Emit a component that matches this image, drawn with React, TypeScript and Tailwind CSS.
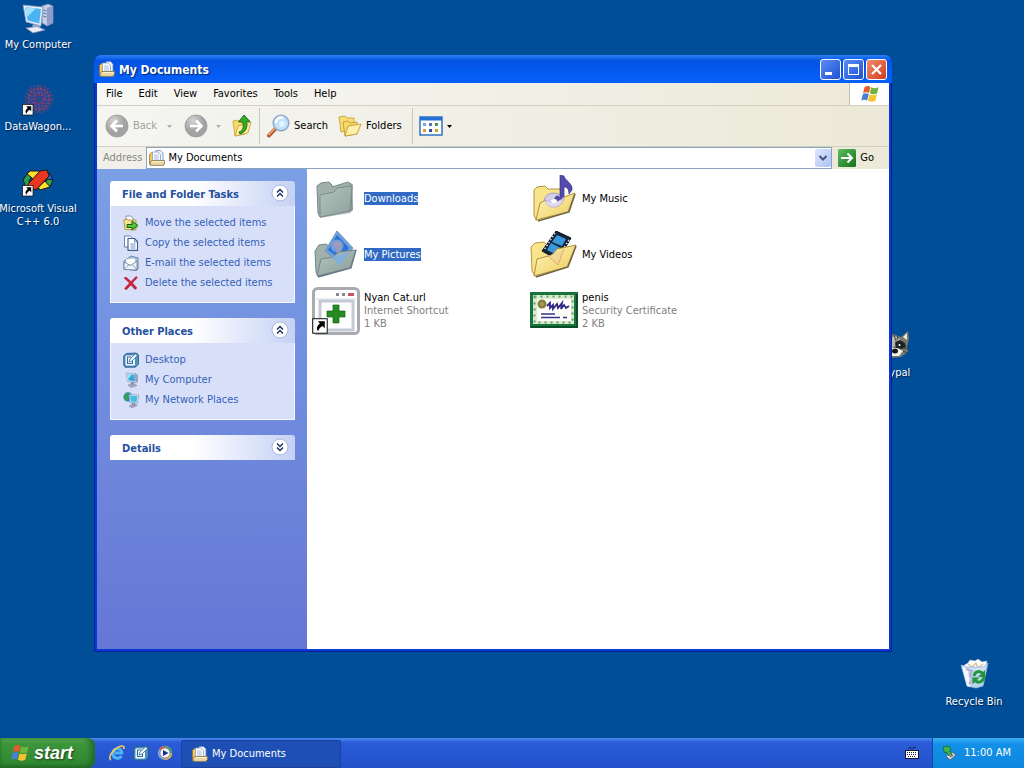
import React, { useState } from "react";

type IconProps = { className?: string };

function Flag({ className }: IconProps) {
  return (
    <svg viewBox="0 0 20 20" className={className} aria-hidden="true">
      <path d="M4.5 3.2C6.5 1.6 8.6 1.8 10.4 2.8L9 9C7 8 5 8 3 9.3Z" fill="#e8592b" />
      <path d="M11.2 3.2C13.4 4.6 16 4.4 18.6 3.2L17 9.6C14.6 10.6 12 10.6 9.8 9.3Z" fill="#6fb53c" />
      <path d="M2.8 10.2C4.8 8.8 6.8 8.9 8.8 10L7.2 16.4C5.2 15.4 3.2 15.4 1.2 16.8Z" fill="#4a7fd8" />
      <path d="M9.6 10.3C11.8 11.6 14.4 11.6 16.8 10.6L15.2 17C12.6 18.2 10.2 18 8 16.7Z" fill="#f5c42c" />
    </svg>
  );
}

function DocsIcon({ className }: IconProps) {
  return (
    <svg viewBox="0 0 16 16" className={className} aria-hidden="true">
      <path d="M.5 4.500L2.500 2.500H5V14.500H.5Z" fill="#f3c95c" stroke="#a3772a" strokeWidth=".8" />
      <path d="M7 .5H11.500L14 3V11H7Z" fill="#eef4fe" stroke="#6d86b5" strokeWidth=".8" />
      <path d="M3.500 2H9L11.500 4.500V11H3.500Z" fill="#fff" stroke="#7d92bb" strokeWidth=".7" />
      <path d="M5 5H9.500M5 7H10M5 9H10" stroke="#8fb0dd" strokeWidth=".9" />
      <path d="M3 10.500H15.500V14H14.500V15.400H1.500L1 12Z" fill="#e9d7a4" stroke="#84724c" strokeWidth=".8" />
      <path d="M3.500 11.500H14.500" stroke="#fff4cf" strokeWidth=".9" />
    </svg>
  );
}

function ComputerIcon({ className }: IconProps) {
  return (
    <svg viewBox="0 0 32 32" className={className} aria-hidden="true">
      <path d="M20 4L26 2L31 4V21L25 24L20 21Z" fill="#c4cee6" stroke="#7484ae" strokeWidth=".8" />
      <path d="M25 6L31 4V21L25 24Z" fill="#8d9cc8" />
      <path d="M21 8L24.500 9M21 11L24.500 12M21 14L24.500 15" stroke="#5f719f" strokeWidth="1" />
      <path d="M11 22L18 23L18.500 27L10 26Z" fill="#9fb0d4" />
      <path d="M4 26L15 24.500L23 28L11 31Z" fill="#e9edf8" stroke="#8391b5" strokeWidth=".8" />
      <path d="M1 3L21 5L19 24L4 20Z" fill="#e8eefb" stroke="#7f8fb8" strokeWidth=".8" />
      <path d="M3 5L19 7L17.300 21.500L5.500 18.500Z" fill="#48b5f2" />
      <path d="M3 5L14 6.400L5 15Z" fill="#9fe0fb" />
    </svg>
  );
}

function Shortcut({ x, y, s }: { x: number; y: number; s: number }) {
  return (
    <g transform={`translate(${x} ${y}) scale(${s})`}>
      <rect x=".5" y=".5" width="10" height="10" fill="#fff" stroke="#111" strokeWidth=".7" />
      <path d="M4 2.200H8.800V7L7.300 5.500C5.700 6.500 4.500 7.600 4.300 9.200C2.600 7.400 3.500 5.200 5.500 3.800Z" fill="#000" />
    </g>
  );
}

function SpiralIcon({ className }: IconProps) {
  return (
    <svg viewBox="0 0 32 32" className={className} aria-hidden="true">
      <circle cx="17" cy="15" r="12" fill="#4a3f86" opacity=".55" />
      <g fill="none" strokeDasharray="2 1.600">
        <circle cx="17" cy="15" r="13.500" stroke="#55427f" strokeWidth="2" />
        <circle cx="17" cy="15" r="10.500" stroke="#8d4468" strokeWidth="2.200" />
        <circle cx="17" cy="15" r="7.500" stroke="#50489a" strokeWidth="2.200" />
        <circle cx="17" cy="15" r="5" stroke="#98385c" strokeWidth="2.200" />
        <path d="M8 5L26 26M26 5L8 26M17 1V29" stroke="#7e4173" strokeWidth="1" />
      </g>
      <circle cx="17" cy="15" r="3" fill="#274b8d" />
      <Shortcut x={0} y={20} s={1.05} />
    </svg>
  );
}

function VisualCIcon({ className }: IconProps) {
  return (
    <svg viewBox="0 0 32 32" className={className} aria-hidden="true">
      <g stroke="#191919" strokeWidth="1">
        <path d="M1 14L5 8L10 10L7 15L9 22L4 21Z" fill="#2c9c49" />
        <path d="M5 8L8 5L17 5L19 8L12 14L9 11Z" fill="#ffe02e" />
        <path d="M23 5L28 8L31 14L28 16L24 12Z" fill="#2e67cc" />
        <path d="M31 14L28 21L23 18L25 13Z" fill="#39a04a" />
        <path d="M28 21L18 24L16 21L23 15Z" fill="#ffe02e" />
        <path d="M7 17L18 5L25 4L27 10L15 23L10 24L5 21Z" fill="#e9371e" />
      </g>
      <Shortcut x={0} y={19} s={1.05} />
    </svg>
  );
}

function RaccoonIcon({ className }: IconProps) {
  return (
    <svg viewBox="0 0 32 32" className={className} aria-hidden="true">
      <path d="M2 8L9 6L15 4L23 7L30 1L31 9L29 17L30 22L23 27L14 28L5 22Z" fill="#77786f" />
      <path d="M25 7L29 3L29 10Z" fill="#efe9da" />
      <path d="M11 8L17 6L23 10L19 12L15 18L10 13Z" fill="#b9b7aa" />
      <path d="M17 12L22 10L27 13L28 17L24 19L18 18Z" fill="#202326" />
      <path d="M7 13L13 15L14 19L8 20Z" fill="#202326" />
      <path d="M14 18L19 18L25 21L21 26L13 26L10 22Z" fill="#f5f4e9" />
      <ellipse cx="17" cy="21" rx="3" ry="2.500" fill="#171a1c" />
      <circle cx="21.500" cy="15" r="1" fill="#fff" />
      <path d="M16 5L18 11M20 6L19 10M26 18L30 19M25 21L29 23" stroke="#414640" strokeWidth="1" />
    </svg>
  );
}

function RecycleIcon({ className }: IconProps) {
  return (
    <svg viewBox="0 0 32 32" className={className} aria-hidden="true">
      <path d="M5 7L10 4L12 1L17 2L20 0L24 3L29 2L27 11L6 12Z" fill="#fff" stroke="#b8bfd5" strokeWidth=".7" />
      <path d="M10 5L14 8L18 4L20 9L25 5" fill="none" stroke="#d6ba8e" strokeWidth="1.200" />
      <path d="M3 6L8 8L25 8L30 4L25 27L18 29L9 27Z" fill="#c9e0f3" fillOpacity=".93" stroke="#91b6d9" strokeWidth=".8" />
      <path d="M4 7L10 11L12 28L9 27Z" fill="#f2f8fd" />
      <path d="M8 10L14 12L12 16L15 20L11 25" fill="none" stroke="#b6a8d4" strokeWidth="2" />
      <g fill="none" stroke="#22963b" strokeWidth="3">
        <path d="M16 17C17 12 22 11 25 15" />
        <path d="M26 18C25 23 20 25 17 21" />
      </g>
      <path d="M27 11V18H20ZM14.500 25.500V18.500H21.500Z" fill="#22963b" />
    </svg>
  );
}

function MoveIcon({ className }: IconProps) {
  return (
    <svg viewBox="0 0 16 16" className={className} aria-hidden="true">
      <path d="M3 1H8L10 3V9H3Z" fill="#fff" stroke="#6e82a6" strokeWidth=".8" />
      <path d="M.8 5L4 4L5 5H13V15L2 14.500Z" fill="#f4e58c" stroke="#a58431" strokeWidth=".8" />
      <path d="M4 9.500H9V6L15 10.500L9 15V12.500H4Z" fill="#5cc22e" stroke="#12631a" strokeWidth="1" />
    </svg>
  );
}
function CopyIcon({ className }: IconProps) {
  return (
    <svg viewBox="0 0 16 16" className={className} aria-hidden="true">
      <path d="M1.500 1H7.500L9.500 3V12H1.500Z" fill="#fff" stroke="#5875a8" strokeWidth=".9" />
      <path d="M5 3.500H11.500L14.500 6.500V15.400H5Z" fill="#fff" stroke="#385a94" strokeWidth="1.100" />
      <path d="M11.500 4V7H14.500M7.500 9H12.500M7.500 11H12.500M7.500 13H12.500" stroke="#6387bd" strokeWidth=".9" fill="none" />
    </svg>
  );
}
function MailIcon({ className }: IconProps) {
  return (
    <svg viewBox="0 0 16 16" className={className} aria-hidden="true">
      <path d="M1 6L8 1L15 3V14L13 15.500L1 14Z" fill="#a9c3df" stroke="#59779b" strokeWidth=".8" />
      <path d="M3 4L12 3L13 10H3Z" fill="#fff" stroke="#a0aabb" strokeWidth=".5" />
      <path d="M1 7L7.500 10.500L14 6V15L1 14.500Z" fill="#edf3fa" stroke="#687b96" strokeWidth=".8" />
      <path d="M1 14.500L6 9.500M14 15L9.500 9.500" stroke="#687b96" strokeWidth=".7" />
    </svg>
  );
}
function DeleteIcon({ className }: IconProps) {
  return (
    <svg viewBox="0 0 16 16" className={className} aria-hidden="true">
      <path d="M1 3L3 2L8 6.500L13 1.500L14.500 2.500L9.500 8L14 13L12 14.500L8 10L3 15L1.500 13.500L6.500 8Z" fill="#cf1f35" stroke="#9a1226" strokeWidth=".4" />
    </svg>
  );
}
function DesktopIcon({ className }: IconProps) {
  return (
    <svg viewBox="0 0 16 16" className={className} aria-hidden="true">
      <path d="M3 1.500L13.500 1L15.500 3V12L12.500 15.200H2L.7 13V4Z" fill="#4c93c4" stroke="#1f5686" strokeWidth=".8" />
      <rect x="2" y="3" width="10.500" height="11" rx="1.500" fill="#f5fbff" stroke="#3478a9" strokeWidth=".8" />
      <path d="M8.500 5H4.500V11.500H9.500V9" fill="none" stroke="#356e99" strokeWidth="1.100" />
      <path d="M6 10L7 7L12.500 2L14.500 3.500L9 9Z" fill="#fff" stroke="#2a699a" strokeWidth=".8" />
    </svg>
  );
}
function MonitorIcon({ className }: IconProps) {
  return (
    <svg viewBox="0 0 16 16" className={className} aria-hidden="true">
      <path d="M3 1L12.500 1.500L13 10.500L4.500 9.500Z" fill="#ecf3ff" stroke="#8193b9" strokeWidth=".6" />
      <path d="M4.200 2.200L11.500 2.600L12 9.300L5.500 8.500Z" fill="#36a9d8" />
      <path d="M4.200 2.200L9 2.600L5 7Z" fill="#9be2f2" />
      <path d="M12.500 1.500L14.500 3V9.500L13 10.500ZM8 10H11V12H8ZM5 13L10 11.500L14 13.500L8 15.500Z" fill="#a7a4c6" stroke="#7681a3" strokeWidth=".5" />
    </svg>
  );
}
function NetworkIcon({ className }: IconProps) {
  return (
    <svg viewBox="0 0 16 16" className={className} aria-hidden="true">
      <circle cx="5" cy="5" r="4.700" fill="#3b8bc8" />
      <path d="M1 4L4 .8L7 1L5 4L6 7L3 9L2 6Z" fill="#38a149" />
      <path d="M6 2.500L15.500 3L14.500 11.500L7 10.500Z" fill="#ecf3ff" stroke="#6988ae" strokeWidth=".6" />
      <path d="M7 3.600L14.300 4L13.500 10.400L7.900 9.600Z" fill="#44bfe2" />
      <path d="M9 11H12V13H9ZM6 14L10 12.500L14.500 13.500L9 15.700Z" fill="#b0a5c4" stroke="#7782a1" strokeWidth=".5" />
    </svg>
  );
}

function NavCircle({ forward = false }: { forward?: boolean }) {
  return (
    <svg viewBox="0 0 24 24" className="size-6" aria-hidden="true">
      <defs>
        <radialGradient id={forward ? "navF" : "navB"} cx=".35" cy=".25">
          <stop offset="0" stopColor="#d2d2d2" />
          <stop offset="1" stopColor="#a2a2a2" />
        </radialGradient>
      </defs>
      <circle cx="12" cy="12" r="11" fill={forward ? "url(#navF)" : "url(#navB)"} stroke="#999" strokeWidth=".8" />
      <path
        d={forward ? "M6 12H17M12 6.500L17.500 12L12 17.500" : "M18 12H7M12 6.500L6.500 12L12 17.500"}
        fill="none" stroke="#fff" strokeWidth="2.600"
      />
    </svg>
  );
}

function UpIcon() {
  return (
    <svg viewBox="0 0 24 24" className="size-6" aria-hidden="true">
      <path d="M2 7L7 6L9 8L14 7V20L4 22Z" fill="#f9dc6c" stroke="#c69b2f" strokeWidth=".8" />
      <path d="M7 12L20 8L17 19L4 22Z" fill="#fcec9b" stroke="#c69b2f" strokeWidth=".8" />
      <path d="M8 18C12.500 16.500 13 12.500 11.500 8H7.500L13 1L19 7.500H15.500C17 13 14.500 18.500 9 20Z" fill="#39a929" stroke="#166b17" strokeWidth=".9" />
    </svg>
  );
}
function SearchIcon() {
  return (
    <svg viewBox="0 0 24 24" className="size-6" aria-hidden="true">
      <path d="M10 14L3 21.500" stroke="#a75531" strokeWidth="4" strokeLinecap="round" />
      <path d="M9 14L3 20.500" stroke="#ed9968" strokeWidth="2" strokeLinecap="round" />
      <circle cx="15" cy="9" r="7.800" fill="#bfe3fb" stroke="#8fa7cd" strokeWidth="1.500" />
      <path d="M10 9A5 5 0 0 1 17 4" stroke="#fff" strokeWidth="2.500" fill="none" />
      <circle cx="16" cy="10" r="3" fill="#e0f5ff" />
    </svg>
  );
}
function FoldersIcon() {
  return (
    <svg viewBox="0 0 24 24" className="size-6" aria-hidden="true">
      <path d="M1 3L7 2L9 4L16 4V15L3 18Z" fill="#f8de75" stroke="#c7a33b" strokeWidth=".9" />
      <path d="M5 8L10 7L12 9L19 8V20L7 22Z" fill="#f7da69" stroke="#c29a31" strokeWidth=".9" />
      <path d="M10 12L23 10L19 20L7 22Z" fill="#fdf0a9" stroke="#c29a31" strokeWidth=".9" />
    </svg>
  );
}
function ViewsIcon() {
  return (
    <svg viewBox="0 0 24 20" className="h-5 w-6" aria-hidden="true">
      <rect x="1" y="1" width="22" height="18" fill="#fff" stroke="#2468bd" strokeWidth="1.400" />
      <path d="M1 1H23V4.500H1Z" fill="#2570d5" />
      <path d="M4 7H7V10H4Z" fill="#81a2dc" /><path d="M10 7H13V10H10Z" fill="#5672b8" /><path d="M16 7H19V10H16Z" fill="#3da047" />
      <path d="M4 13H7V16H4Z" fill="#e59245" /><path d="M10 13H13V16H10Z" fill="#27509d" /><path d="M16 13H19V16H16Z" fill="#d2a52a" />
    </svg>
  );
}
function Caret({ className }: IconProps) {
  return (
    <svg viewBox="0 0 5 3" className={className} aria-hidden="true">
      <path d="M0 0H5L2.500 3Z" fill="currentColor" />
    </svg>
  );
}

function DownloadsFolder() {
  return (
    <svg viewBox="0 0 48 48" className="size-12 shrink-0" aria-hidden="true">
      <defs><linearGradient id="dl" x2="1" y2="1"><stop stopColor="#b3c3bd" /><stop offset="1" stopColor="#8fa199" /></linearGradient></defs>
      <path d="M8 43L38 38L41 35L41 9L38 8" fill="#7a8494" opacity=".6" />
      <path d="M5 11L9 8L17 7L20 10V12L36 7L39 9L40 35L8 42L6 38Z" fill="#a0b1ac" stroke="#74858a" strokeWidth="1" />
      <path d="M8 20L22 17L25 13L40 11L38 36L8 42Z" fill="url(#dl)" stroke="#7b8c8d" strokeWidth="1" />
    </svg>
  );
}
function PicturesFolder() {
  return (
    <svg viewBox="0 0 48 48" className="size-12 shrink-0" aria-hidden="true">
      <defs><linearGradient id="pic" x2="1" y2="1"><stop stopColor="#b6c6bf" /><stop offset="1" stopColor="#8a9c95" /></linearGradient></defs>
      <path d="M3 20L7 14L14 13L18 16L34 14V38L6 45L4 41Z" fill="#a0b1ac" stroke="#74858a" strokeWidth="1" />
      <path d="M25 0L41 17L30 33L13 20Z" fill="#6b9fdf" stroke="#7794bc" strokeWidth="1" />
      <path d="M25 4L37 17L29 28L16 19Z" fill="#2c70d1" />
      <circle cx="25" cy="15" r="6.500" fill="#6b9edf" />
      <path d="M21 15C20 9 29 8 30 14L28 21L24 22L25 18Z" fill="#a09cb8" />
      <path d="M9 28L21 26L27 21L44 19L38 37L5 45Z" fill="url(#pic)" stroke="#74858a" strokeWidth="1" />
      <path d="M19 26L38 21L28 35Z" fill="#7aaeea" opacity=".75" />
      <path d="M44 19L39 37L6 46" fill="none" stroke="#66788a" strokeWidth="1.300" />
    </svg>
  );
}
function YellowFolder({ kind }: { kind: "music" | "video" }) {
  const music = kind === "music";
  return (
    <svg viewBox="0 0 48 48" className="size-12 shrink-0" aria-hidden="true">
      <defs>
        <linearGradient id={music ? "musicGold" : "videoGold"} x2="1" y2="1">
          <stop stopColor="#fff8bc" /><stop offset="1" stopColor="#edc95a" />
        </linearGradient>
      </defs>
      {music ? (
        <>
          <path d="M4 15L7 12L15 11L18 14L32 14V36L6 45L4 40Z" fill="#f8e48b" stroke="#b49443" strokeWidth="1" />
          <ellipse cx="24" cy="26" rx="10" ry="8" fill="#d3cde8" stroke="#a79dc7" strokeWidth="1" />
          <path d="M30 23V0L34 1C35 6 43 8 42 15L39 19C39 13 36 12 34 12V23C32 29 24 27 25 23C26 20 29 21 30 23Z" fill="#554bac" stroke="#393382" strokeWidth=".7" />
          <path d="M10 28L16 25C18 35 33 33 34 22L45 18L38 37L6 45Z" fill="url(#musicGold)" stroke="#b18f3b" strokeWidth="1" />
          <path d="M15 25C17 36 33 34 34 22C30 27 22 29 15 25Z" fill="#e0dbf0" stroke="#b9afd0" strokeWidth=".8" />
          <ellipse cx="24" cy="26" rx="3" ry="2" fill="#fff" />
          <path d="M45 19L39 37L8 46" fill="none" stroke="#6d6541" strokeWidth="1.500" />
        </>
      ) : (
        <>
          <path d="M1 16L5 12L14 11L18 15L31 15V36L5 45L2 40Z" fill="#f8e48b" stroke="#b49443" strokeWidth="1" />
          <path d="M26 0L41 7L28 29L12 20Z" fill="#172436" stroke="#08111e" strokeWidth="1" />
          <path d="M27 4L36 8L32 15L22 11ZM21 12L31 17L27 24L17 19Z" fill="#3a98dc" />
          <path d="M25 2L14 19M39 9L28 26" stroke="#d7e6f3" strokeWidth="1.500" strokeDasharray="1.500 2" />
          <path d="M7 28L22 24L27 18L46 14L37 36L4 45Z" fill="url(#videoGold)" stroke="#b18f3b" strokeWidth="1" />
          <path d="M18 25L28 34L34 18" fill="#efcf98" fillOpacity=".6" stroke="#dc9b6c" strokeWidth=".8" />
          <path d="M46 15L38 36L6 46" fill="none" stroke="#6d6541" strokeWidth="1.500" />
        </>
      )}
    </svg>
  );
}
function UrlIcon() {
  return (
    <svg viewBox="0 0 48 48" className="size-12 shrink-0" aria-hidden="true">
      <rect x="1.500" y="1.500" width="45" height="45" rx="4" fill="#fff" stroke="#a9abb0" strokeWidth="3" />
      <path d="M24 6H27V9H24ZM30 6H33V9H30Z" fill="#878b94" /><path d="M36 6H42V9H36Z" fill="#c65367" />
      <path d="M4 12H44" stroke="#d7dae1" strokeWidth="1" />
      <rect x="8" y="14" width="33" height="29" fill="#fff" stroke="#c4cad3" strokeWidth="3" />
      <path d="M21 18H27V24H33V30H27V36H21V30H15V24H21Z" fill="#258a20" stroke="#176215" strokeWidth=".7" />
      <Shortcut x={0} y={31} s={1.45} />
    </svg>
  );
}
function CertificateIcon() {
  return (
    <svg viewBox="0 0 48 48" className="size-12 shrink-0" aria-hidden="true">
      <rect x="0" y="5" width="48" height="36" fill="#17743b" />
      <rect x="3" y="8" width="41" height="29" fill="#dcebcf" />
      <rect x="4.500" y="9.500" width="38" height="26" fill="none" stroke="#5d9e6b" strokeWidth="2" strokeDasharray="2 4" />
      <rect x="7" y="12" width="34" height="22" fill="#fffef9" />
      <circle cx="12" cy="17" r="4.500" fill="#87813b" /><circle cx="12" cy="17" r="2" fill="#a49c58" />
      <path d="M17 19L20 16L20 21L23 18L23 22L27 17L28 21L32 16L31 22L34 18L36 21L39 19" fill="none" stroke="#302a87" strokeWidth="1.800" />
      <path d="M11 27H25M11 30.500H30M33 30.500H37" stroke="#37378e" strokeWidth="1.500" />
      <path d="M1 40H47V7" fill="none" stroke="#0a4d29" strokeWidth="2" />
    </svg>
  );
}

function ExplorerIcon() {
  return (
    <svg viewBox="0 0 16 16" className="size-4" aria-hidden="true">
      <path d="M12.500 11C10.500 14.500 3.500 14 4 8C4.500 2.500 12.500 2 12.800 8H6" fill="none" stroke="#4fb4f5" strokeWidth="3" />
      <path d="M2 15C-1.500 13 3 5 9.500 2C13.500 .2 16 1 14.500 4" fill="none" stroke="#f4cd55" strokeWidth="1.600" />
    </svg>
  );
}
function PlayerIcon() {
  return (
    <svg viewBox="0 0 16 16" className="size-4" aria-hidden="true">
      <circle cx="8" cy="8" r="7.200" fill="#8ba5cf" />
      <path d="M2 5A7 7 0 0 1 8 1V5Z" fill="#e65a35" /><path d="M8 1A7 7 0 0 1 15 8H11Z" fill="#48a54a" />
      <path d="M15 8A7 7 0 0 1 8 15V11Z" fill="#e5ab42" />
      <circle cx="8" cy="8" r="5" fill="#f3f7fd" stroke="#54698f" strokeWidth=".6" />
      <path d="M6 5L11.500 8L6 11Z" fill="#17328a" />
    </svg>
  );
}
function KeyboardIcon() {
  return (
    <svg viewBox="0 0 16 16" className="size-4" aria-hidden="true">
      <path d="M4 4L6 2L8 4L10 2L12 3" fill="none" stroke="#172653" strokeWidth="1" />
      <rect x="1.500" y="5.500" width="13" height="8" fill="#fff" stroke="#14162c" />
      <path d="M3 7.500H13M3 9.500H13M4 11.500H12" stroke="#14162c" strokeWidth="1" strokeDasharray="1 1" />
    </svg>
  );
}
function EjectIcon() {
  return (
    <svg viewBox="0 0 16 16" className="size-4" aria-hidden="true">
      <path d="M4 11L10 7L14 10L8 15Z" fill="#d6d9de" stroke="#545d6e" strokeWidth=".8" />
      <path d="M1 2L7 1L9 5L7.500 6L10 9.500L6.500 10.500L4.500 7L2.500 8Z" fill="#41b34a" stroke="#17652f" strokeWidth=".8" />
      <path d="M8 12L11 10" stroke="#444b58" />
    </svg>
  );
}

function DesktopItem({ label, icon, className }: { label: string; icon: React.ReactNode; className: string }) {
  return (
    <button className={`absolute flex w-20 flex-col items-center gap-1 leading-[13px] text-white [text-shadow:1px_1px_1px_#002050] ${className}`}>
      {icon}
      <span>{label}</span>
    </button>
  );
}

function Panel({ title, links }: { title: string; links: { label: string; icon: React.ReactNode }[] }) {
  const [open, setOpen] = useState(links.length > 0);
  return (
    <section>
      <h2 className="rounded-t-[3px] bg-linear-to-r from-white from-45% to-[#c5d1f5]">
        <button
          className="flex h-[25px] w-full items-center justify-between pr-1.5 pl-3 font-bold text-[#24509f]"
          onClick={() => setOpen(!open)}
          aria-expanded={open}
        >
          <span className="pt-1">{title}</span>
          <svg viewBox="0 0 18 18" className="mb-0.5 size-[18px]" aria-hidden="true">
            <circle cx="9" cy="9" r="8" fill="#fff" stroke="#a9b6d8" strokeWidth="1" />
            <path
              d={open ? "M6 8.500L9 5.500L12 8.500M6 12.500L9 9.500L12 12.500" : "M6 5.500L9 8.500L12 5.500M6 9.500L9 12.500L12 9.500"}
              fill="none" stroke="#1e3463" strokeWidth="1.500"
            />
          </svg>
        </button>
      </h2>
      {open && links.length > 0 && (
        <ul className="border border-t-0 border-[#f4f7ff] bg-[#d8e0f9] pt-[7px] pb-[9px] pl-3">
          {links.map((l) => (
            <li key={l.label} className="h-5">
              <a href="#" className="flex h-5 items-center gap-1.5 text-[#3560b8]">
                {l.icon}
                {l.label}
              </a>
            </li>
          ))}
        </ul>
      )}
    </section>
  );
}

function FileItem({ name, icon, selected, type, size }: { name: string; icon: React.ReactNode; selected?: boolean; type?: string; size?: string }) {
  return (
    <button className="flex h-14 items-center gap-1 pb-2 text-left leading-[13px] text-black">
      {icon}
      <span className="flex flex-col items-start pb-0.5">
        <span className={selected ? "bg-[#316ac5] text-white" : ""}>{name}</span>
        {type && <span className="text-[#808080]">{type}</span>}
        {size && <span className="text-[#808080]">{size}</span>}
      </span>
    </button>
  );
}

const taskLinks = [
  { label: "Move the selected items", icon: <MoveIcon className="size-4" /> },
  { label: "Copy the selected items", icon: <CopyIcon className="size-4" /> },
  { label: "E-mail the selected items", icon: <MailIcon className="size-4" /> },
  { label: "Delete the selected items", icon: <DeleteIcon className="size-4" /> },
];
const placeLinks = [
  { label: "Desktop", icon: <DesktopIcon className="size-4" /> },
  { label: "My Computer", icon: <MonitorIcon className="size-4" /> },
  { label: "My Network Places", icon: <NetworkIcon className="size-4" /> },
];

function ExplorerWindow() {
  const [address, setAddress] = useState("My Documents");
  const frameButton = "flex size-[21px] items-center justify-center rounded-[3px] border border-white";
  return (
    <section className="absolute top-[55px] right-[132px] bottom-[86px] left-[94px] flex flex-col overflow-hidden rounded-t-[7px] bg-[#0c38d4] px-[3px] pb-[3px] shadow-[inset_-1px_-1px_0_#04209c,inset_1px_0_0_#04209c]">
      <header className="-mx-[3px] flex h-7 shrink-0 items-center gap-1 bg-linear-to-b from-[#2b80f5] via-[#0453e4] via-20% to-[#0561fb] px-[5px]">
        <DocsIcon className="size-4" />
        <h1 className="flex-1 pt-0.5 text-[12px] font-bold text-white [text-shadow:1px_1px_1px_#08256e]">My Documents</h1>
        <div className="flex gap-0.5">
          <button aria-label="Minimize" className={`${frameButton} bg-linear-to-br from-[#5b8cf3] to-[#1f50d3]`}>
            <svg viewBox="0 0 19 19" className="size-[19px]"><path d="M4 12H11V15H4Z" fill="#fff" /></svg>
          </button>
          <button aria-label="Maximize" className={`${frameButton} bg-linear-to-br from-[#5b8cf3] to-[#1f50d3]`}>
            <svg viewBox="0 0 19 19" className="size-[19px]"><path d="M4 4H15V15H4ZM5 7V14H14V7Z" fill="#fff" fillRule="evenodd" /></svg>
          </button>
          <button aria-label="Close" className={`${frameButton} bg-linear-to-br from-[#f08b6c] to-[#cf3a16]`}>
            <svg viewBox="0 0 19 19" className="size-[19px]"><path d="M5 5L14 14M14 5L5 14" stroke="#fff" strokeWidth="2.200" /></svg>
          </button>
        </div>
      </header>

      <div className="flex h-[23px] shrink-0 border-b border-[#d2cfc0] bg-linear-to-r from-[#f7f7f5] to-[#ece9d8]">
        <nav className="flex flex-1 pl-px">
          {["File", "Edit", "View", "Favorites", "Tools", "Help"].map((m) => (
            <button key={m} className="px-2">{m}</button>
          ))}
        </nav>
        <div className="flex w-10 items-center justify-center border-l border-[#c5c2b4] bg-white">
          <Flag className="size-5" />
        </div>
      </div>

      <div className="flex h-[41px] shrink-0 items-center border-b border-[#d2cfc0] bg-linear-to-r from-[#f5f5f2] to-[#ece9d8] pl-2">
        <button className="flex items-center gap-1 text-[#a3a296]"><NavCircle />Back</button>
        <button aria-label="Back history" className="px-2.5 text-[#b0afa5]"><Caret className="h-[3px] w-[5px]" /></button>
        <button aria-label="Forward" className="ml-0.5"><NavCircle forward /></button>
        <button aria-label="Forward history" className="px-2 text-[#b0afa5]"><Caret className="h-[3px] w-[5px]" /></button>
        <button aria-label="Up" className="ml-0.5"><UpIcon /></button>
        <div className="mx-1 h-9 w-px bg-[#cbc8ba]" />
        <button className="flex items-center gap-1 px-0.5"><SearchIcon />Search</button>
        <button className="ml-1.5 flex items-center gap-1 px-0.5"><FoldersIcon />Folders</button>
        <div className="mr-1.5 ml-2 h-9 w-px bg-[#cbc8ba]" />
        <button aria-label="Views" className="flex items-center gap-1"><ViewsIcon /><Caret className="h-[3px] w-[5px]" /></button>
      </div>

      <div className="flex h-[22px] shrink-0 items-center bg-linear-to-r from-[#f1f0ea] to-[#ece9d8] pr-[15px] pl-1.5">
        <label htmlFor="address" className="pr-1 text-[#8a897f]">Address</label>
        <div className="flex h-[22px] flex-1 items-center gap-[3px] border border-[#8aa3bd] bg-white pl-0.5">
          <DocsIcon className="size-4" />
          <input id="address" value={address} onChange={(e) => setAddress(e.target.value)} className="min-w-0 flex-1 outline-none" />
          <button aria-label="Show addresses" className="flex h-[18px] w-4 items-center justify-center rounded-[2px] bg-linear-to-br from-[#dbe5fd] to-[#afc3f4]">
            <svg viewBox="0 0 10 8" className="h-2 w-2.5"><path d="M1.500 2L5 5.500L8.500 2" fill="none" stroke="#41557f" strokeWidth="2" /></svg>
          </button>
        </div>
        <button className="ml-1.5 flex items-center gap-1">
          <svg viewBox="0 0 18 18" className="size-[18px]" aria-hidden="true">
            <defs><linearGradient id="go" x2="1" y2="1"><stop stopColor="#61bd61" /><stop offset="1" stopColor="#11701a" /></linearGradient></defs>
            <rect width="18" height="18" rx="1.500" fill="url(#go)" />
            <path d="M3 9H14M9.500 4.500L14 9L9.500 13.500" fill="none" stroke="#fff" strokeWidth="2" />
          </svg>
          Go
        </button>
      </div>

      <div className="flex min-h-0 flex-1">
        <aside className="flex w-[210px] shrink-0 flex-col gap-[15px] bg-linear-to-b from-[#7b9fe5] to-[#6577d6] py-3 pr-3 pl-[13px]">
          <Panel title="File and Folder Tasks" links={taskLinks} />
          <Panel title="Other Places" links={placeLinks} />
          <Panel title="Details" links={[]} />
        </aside>
        <div className="grid flex-1 auto-rows-min grid-cols-[repeat(2,218px)] content-start overflow-hidden bg-white pt-1.5 pl-[5px]">
          <FileItem name="Downloads" selected icon={<DownloadsFolder />} />
          <FileItem name="My Music" icon={<YellowFolder kind="music" />} />
          <FileItem name="My Pictures" selected icon={<PicturesFolder />} />
          <FileItem name="My Videos" icon={<YellowFolder kind="video" />} />
          <FileItem name="Nyan Cat.url" type="Internet Shortcut" size="1 KB" icon={<UrlIcon />} />
          <FileItem name="penis" type="Security Certificate" size="2 KB" icon={<CertificateIcon />} />
        </div>
      </div>
    </section>
  );
}

export default function App() {
  return (
    <div className="flex h-screen flex-col overflow-hidden bg-[#004e98] font-['DejaVu_Sans_Condensed','DejaVu_Sans',sans-serif] text-[11px] text-black">
      <main className="relative flex-1">
        <DesktopItem label="My Computer" className="top-[2px] -left-[2px]" icon={<ComputerIcon className="size-8" />} />
        <DesktopItem label="DataWagon..." className="top-[84px] -left-[2px]" icon={<SpiralIcon className="size-8" />} />
        <DesktopItem label="Microsoft Visual C++ 6.0" className="top-[166px] -left-[2px]" icon={<VisualCIcon className="size-8" />} />
        <DesktopItem label="Paypal" className="top-[330px] right-[90px]" icon={<RaccoonIcon className="size-8" />} />
        <DesktopItem label="Recycle Bin" className="right-[10px] bottom-[30px]" icon={<RecycleIcon className="size-8" />} />
        <ExplorerWindow />
      </main>

      <footer className="flex h-[30px] shrink-0 items-stretch bg-linear-to-b from-[#4a8bf0] via-[#2a5bd8] via-15% to-[#2252cb]">
        <button className="flex w-[95px] items-center gap-1 rounded-r-lg bg-linear-to-b from-[#65b562] via-[#3c963c] via-20% to-[#2e8530] pl-2.5 font-['Liberation_Sans',sans-serif] text-[18px] font-bold text-white italic shadow-[inset_-4px_0_6px_#226b26,inset_0_-2px_3px_#226b26] [text-shadow:1px_1px_2px_#173f18]">
          <Flag className="size-5" />
          start
        </button>
        <div className="flex items-center gap-2 pr-2 pl-3.5">
          <button aria-label="Internet Explorer"><ExplorerIcon /></button>
          <button aria-label="Show Desktop"><DesktopIcon className="size-4" /></button>
          <button aria-label="Media Player"><PlayerIcon /></button>
        </div>
        <button className="mt-0.5 flex w-40 items-center gap-1 rounded-[2px] border border-[#1a429c] bg-[#1e4fb5] pl-2.5 text-white">
          <DocsIcon className="size-4" />
          My Documents
        </button>
        <div className="flex flex-1 items-center justify-end pr-3">
          <button aria-label="Keyboard"><KeyboardIcon /></button>
        </div>
        <div className="flex w-[92px] items-center gap-1.5 border-l border-[#0a4c9c] bg-linear-to-b from-[#3cb0f5] via-[#1290e8] via-20% to-[#0f86dd] pl-[9px] text-white">
          <EjectIcon />
          <time className="whitespace-nowrap">11:00 AM</time>
        </div>
      </footer>
    </div>
  );
}
